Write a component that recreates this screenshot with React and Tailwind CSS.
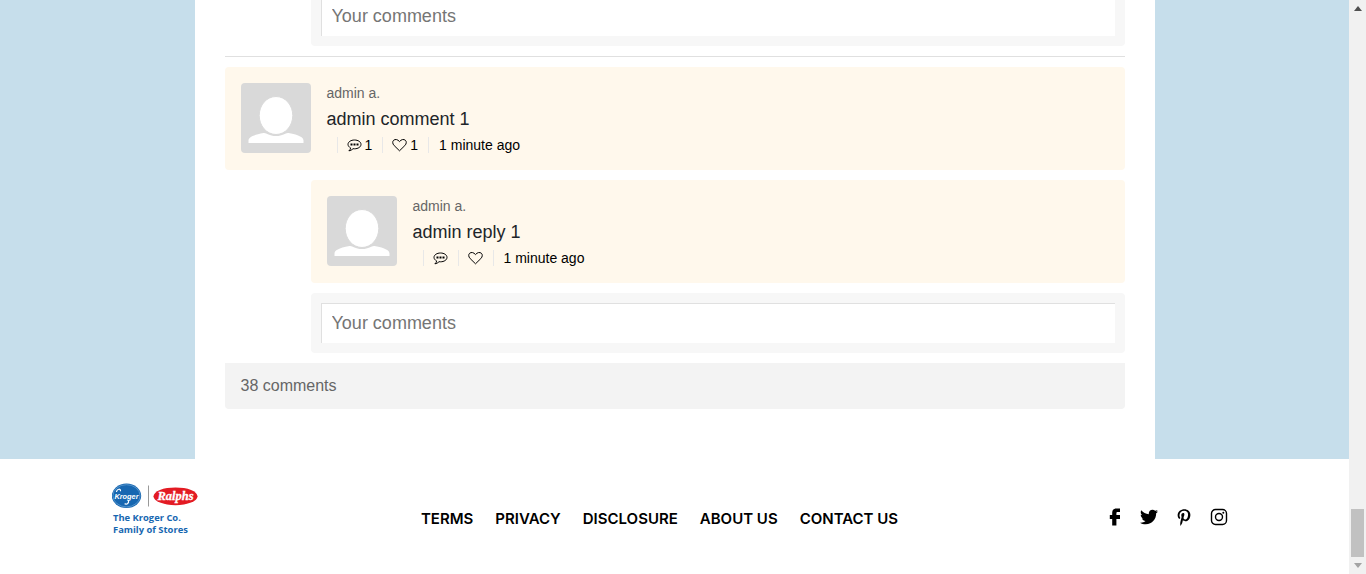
import React from "react";
import { FaTwitter, FaPinterestP } from "react-icons/fa";

function Avatar() {
  return (
    <svg viewBox="0 0 70 70" className="size-[70px] shrink-0 rounded" role="img" aria-label="User avatar">
      <rect width="70" height="70" fill="#d9d9d9" />
      <path
        d="M7.500 60v-2.500c0-3 4-5.500 15-7.500 3-.6 5 3 12.500 3s9.500-3.600 12.500-3c11 2 15 4.500 15 7.500v2.500z"
        fill="#fff"
      />
      <ellipse cx="35" cy="32.500" rx="16.800" ry="19" fill="#fff" stroke="#d9d9d9" strokeWidth="1" />
    </svg>
  );
}

function ChatIcon() {
  return (
    <svg viewBox="0 0 15 14" className="h-3.5 w-[15px]" fill="none" stroke="currentColor" aria-hidden="true">
      <path d="M3.600 9.900C2.100 9.100 1 7.800 1 6.400 1 3.900 3.900 2 7.500 2S14 3.900 14 6.400s-2.900 4.400-6.500 4.400c-.5 0-1-.05-1.500-.1C4.900 11.900 3.500 12.600 1.900 12.800c1-.8 1.600-1.700 1.700-2.900z" strokeLinejoin="round" />
      <path d="M3.500 5.400h2v2h-2zM6.500 5.400h2v2h-2zM9.500 5.400h2v2h-2z" fill="currentColor" stroke="none" />
    </svg>
  );
}

function HeartIcon() {
  return (
    <svg viewBox="0 0 15 14" className="h-3.5 w-[15px]" fill="none" stroke="currentColor" strokeLinejoin="round" aria-hidden="true">
      <path d="M7.500 12.800 2.200 7.600C.3 5.700.4 3.400 1.600 2.300c1.600-1.400 4.100-1 5.900 1.300 1.800-2.300 4.300-2.700 5.900-1.300 1.200 1.100 1.300 3.400-.6 5.300z" />
    </svg>
  );
}

function MetaButton({ label, icon, count }) {
  return (
    <button type="button" aria-label={label} className="flex h-4 items-center gap-[3px] border-l border-[#e8e8e8] pr-2.5 pl-[9px]">
      {icon}
      {count ? <span>{count}</span> : null}
    </button>
  );
}

function Comment({ author, text, replies, likes, time }) {
  return (
    <article className="flex gap-4 rounded bg-[#fff8ec] p-4">
      <Avatar />
      <div className="min-w-0 flex-1 text-sm text-black">
        <p className="leading-5 text-[#666]">{author}</p>
        <p className="text-lg leading-8 text-[#212529]">{text}</p>
        <div className="ml-2.5 flex items-center pt-0.5 pb-px leading-4">
          <MetaButton label="Reply" icon={<ChatIcon />} count={replies} />
          <MetaButton label="Like" icon={<HeartIcon />} count={likes} />
          <time className="flex h-4 items-center border-l border-[#e8e8e8] pl-2.5">{time}</time>
        </div>
      </div>
    </article>
  );
}

function ReplyForm() {
  return (
    <form className="rounded bg-[#f7f7f7] p-2.5" onSubmit={(e) => e.preventDefault()}>
      <input
        type="text"
        aria-label="Your comments"
        placeholder="Your comments"
        className="block h-10 w-full border-t border-l border-[#e0e0e0] bg-white px-2.5 text-lg text-[#212529] outline-none placeholder:text-[#757575]"
      />
    </form>
  );
}

function StoreLogo() {
  return (
    <svg viewBox="0 0 88 56" className="h-14 w-[88px] shrink-0" role="img" aria-label="The Kroger Co. Family of Stores">
      <ellipse cx="14.500" cy="12.800" rx="14.700" ry="12.200" fill="#1767b1" />
      <ellipse cx="14.500" cy="12.800" rx="13.600" ry="11.100" fill="none" stroke="#8dbce2" strokeWidth=".5" />
      <path d="M4.500 8.500c1-2.800 4-3 4-.8" fill="none" stroke="#fff" strokeWidth="1.200" strokeLinecap="round" />
      <path d="M16.500 17.500c.5 2.500-1 4-3.500 3.400" fill="none" stroke="#fff" strokeWidth="1.200" strokeLinecap="round" />
      <text x="14.500" y="15.500" textAnchor="middle" fontFamily="Liberation Sans, sans-serif" fontSize="7.400" fontWeight="700" fontStyle="italic" fill="#fff">Kroger</text>
      <path d="M36.500 2.500v21" stroke="#999" />
      <ellipse cx="63.500" cy="13.300" rx="22" ry="8.900" fill="#e31b23" />
      <text x="63.500" y="17" textAnchor="middle" fontFamily="Liberation Serif, serif" fontSize="12.500" fontWeight="700" fontStyle="italic" fill="#fff" stroke="#fff" strokeWidth=".3">Ralphs</text>
      <g fontFamily="Open Sans, sans-serif" fontSize="9.400" fontWeight="700" fill="#1767b1">
        <text x="1" y="38">The Kroger Co.</text>
        <text x="1" y="50">Family of Stores</text>
      </g>
    </svg>
  );
}

function FacebookIcon() {
  return (
    <svg viewBox="0 0 12 18" className="h-[18px] w-3" fill="currentColor" aria-hidden="true">
      <path d="M3.200 17.500V11H.8V7h2.400V4.600C3.200 2 4.900.5 7.300.5H11v3.500H8.600c-.8 0-1.200.4-1.200 1.200V7H11v4H7.400v6.500z" />
    </svg>
  );
}

function InstagramIcon() {
  return (
    <svg viewBox="0 0 18 18" className="size-[18px]" fill="none" stroke="currentColor" strokeWidth="1.400" aria-hidden="true">
      <rect x="1.500" y="1.500" width="15" height="15" rx="4" />
      <circle cx="9" cy="9" r="3.500" />
      <circle cx="13.300" cy="4.800" r="1" fill="currentColor" stroke="none" />
    </svg>
  );
}

const footerLinks = ["TERMS", "PRIVACY", "DISCLOSURE", "ABOUT US", "CONTACT US"];

function Footer() {
  return (
    <footer className="flex items-center bg-white pt-6 pr-[121px] pb-[35px] pl-28">
      <StoreLogo />
      <nav aria-label="Footer" className="flex flex-1 justify-center gap-[22px] pt-4 pl-2.5 font-['Inter',sans-serif] text-[15px] leading-5 font-semibold whitespace-nowrap text-black">
        {footerLinks.map((label) => (
          <a key={label} href="#">{label}</a>
        ))}
      </nav>
      <div className="flex items-center gap-[19px] pt-3 text-black">
        <a href="#" aria-label="Facebook"><FacebookIcon /></a>
        <a href="#" aria-label="Twitter"><FaTwitter className="size-[18px]" /></a>
        <a href="#" aria-label="Pinterest"><FaPinterestP className="h-[17px] w-3.5" /></a>
        <a href="#" aria-label="Instagram"><InstagramIcon /></a>
      </div>
    </footer>
  );
}

function ScrollRail() {
  return (
    <div aria-hidden="true" className="flex w-[17px] shrink-0 flex-col items-center justify-between bg-[#f1f1f1] pt-1.5 pb-1.5">
      <svg viewBox="0 0 8 5" className="h-[5px] w-2" fill="#505050"><path d="M0 5 4 0l4 5z" /></svg>
      <div className="flex flex-col items-center gap-1.5">
        <div className="h-12 w-[13px] bg-[#c1c1c1]" />
        <svg viewBox="0 0 8 5" className="h-[5px] w-2" fill="#a3a3a3"><path d="M0 0h8L4 5z" /></svg>
      </div>
    </div>
  );
}

export default function App() {
  return (
    <div className="flex min-h-screen overflow-hidden font-['Liberation_Sans',Arial,sans-serif]">
      <div className="min-w-0 flex-1 bg-[#c6deeb]">
        <main className="mx-auto max-w-[960px] overflow-hidden bg-white px-[30px] pb-[50px]">
          <section aria-label="Comments" className="-mt-3.5 flex flex-col gap-2.5">
            <div className="ml-[86px]"><ReplyForm /></div>
            <hr className="border-[#e0e0e0]" />
            <Comment author="admin a." text="admin comment 1" replies={1} likes={1} time="1 minute ago" />
            <div className="ml-[86px] flex flex-col gap-2.5">
              <Comment author="admin a." text="admin reply 1" time="1 minute ago" />
              <ReplyForm />
            </div>
            <p className="rounded-b bg-[#f3f3f3] px-4 py-[11px] text-base text-[#666]">38 comments</p>
          </section>
        </main>
        <Footer />
      </div>
      <ScrollRail />
    </div>
  );
}
